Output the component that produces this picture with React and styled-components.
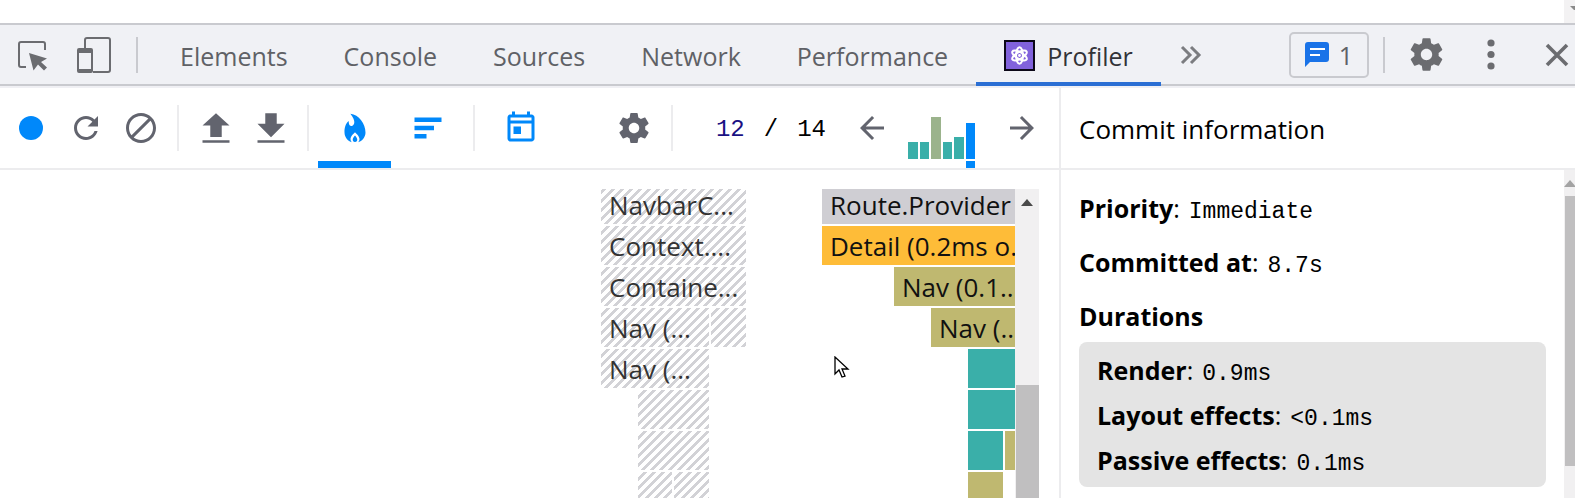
import React from "react";
import styled, { createGlobalStyle } from "styled-components";

const GlobalStyle = createGlobalStyle`
  * {
    box-sizing: border-box;
  }
  body {
    margin: 0;
    overflow: hidden;
    background: #fff;
    color: #000;
    font-family: "Open Sans", "Noto Sans", sans-serif;
    font-size: 25px;
  }
  button,
  input {
    margin: 0;
    padding: 0;
    border: 0;
    background: none;
    color: inherit;
    font: inherit;
  }
  svg {
    display: block;
    flex: none;
  }
`;

const Page = styled.div`
  display: flex;
  flex-direction: column;
  height: 100vh;
  overflow: hidden;
`;

const Viewport = styled.div`
  display: flex;
  justify-content: flex-end;
  flex: none;
  height: 23px;
`;

const ViewportTrack = styled.div`
  width: 11px;
  padding: 6px 0 0 6px;
  overflow: hidden;
  background: #f3f2f3;
`;

const TabBar = styled.header`
  display: flex;
  align-items: center;
  flex: none;
  height: 63px;
  padding-left: 15px;
  border-top: 2px solid #c9cacf;
  border-bottom: 2px solid #c9cacf;
  background: #f0f1f5;
  color: #5f6166;
`;

const BarShade = styled.div`
  flex: none;
  height: 2px;
  background: #f0f0f4;
`;

const BarButton = styled.button`
  display: flex;
  align-items: center;
  justify-content: center;
  flex: none;
  width: ${(props) => props.$width}px;
  height: 59px;
  color: #6b6c70;
`;

const CloseButton = styled(BarButton)`
  margin-left: 24px;
`;

const BarDivider = styled.div`
  flex: none;
  width: 2px;
  height: 36px;
  margin: ${(props) => props.$margin || "0"};
  background: #c9cacf;
`;

const Tabs = styled.nav`
  display: flex;
  flex: 1;
  align-self: stretch;
`;

const Tab = styled.button`
  display: flex;
  align-items: center;
  gap: 12px;
  height: 61px;
  padding: 0 28px;
  color: ${(props) => (props.$active ? "#323338" : "#5f6166")};
  box-shadow: ${(props) => (props.$active ? "inset 0 -4px #2b6fd4" : "none")};
`;

const ExtensionIcon = styled.span`
  display: block;
  border: 2px solid #0c0818;
  background: #8162dc;
`;

const Issues = styled.button`
  display: flex;
  align-items: center;
  justify-content: center;
  gap: 10px;
  width: 80px;
  height: 46px;
  border: 2px solid #c9cacf;
  border-radius: 5px;
`;

const Panels = styled.div`
  display: flex;
  flex: 1;
  min-height: 0;
`;

const Main = styled.main`
  display: flex;
  flex-direction: column;
  flex: 1;
  min-width: 0;
`;

const Toolbar = styled.div`
  display: flex;
  align-items: center;
  flex: none;
  height: 82px;
  padding: 0 10px 0 3px;
  border-bottom: 2px solid #ececee;
`;

const ToolButton = styled.button`
  display: flex;
  align-items: center;
  justify-content: center;
  flex: none;
  width: 55px;
  height: 80px;
  color: ${(props) => (props.$on ? "#0088fa" : "#62646e")};
`;

const ModeButton = styled(ToolButton)`
  width: 73px;
  color: #0088fa;
  box-shadow: ${(props) => (props.$active ? "inset 0 -7px #0088fa" : "none")};
`;

const Divider = styled.div`
  flex: none;
  width: 2px;
  height: 46px;
  margin: 0 9px;
  background: #ececee;
`;

const Spacer = styled.div`
  flex: 1;
`;

const CommitIndex = styled.label`
  display: flex;
  align-items: center;
  gap: 19px;
  padding: 3px 18px 0 0;
  font-family: "Liberation Mono", monospace;
  font-size: 24px;
`;

const IndexInput = styled.input`
  width: 63px;
  color: #1a1183;
  text-align: right;
`;

const Commits = styled.div`
  display: flex;
  align-items: flex-end;
  align-self: stretch;
  gap: 2px;
  width: 67px;
  margin: 0 19px 0 9px;
`;

const Commit = styled.div`
  flex: 1;
  padding-bottom: 2px;
  border-bottom: 7px solid ${(props) => (props.$active ? "#0088fa" : "#fff")};
`;

const CommitBar = styled.div`
  background: ${(props) => props.$color};
`;

const ChartArea = styled.div`
  display: flex;
  flex: 1;
  min-height: 0;
  padding: 19px 20px 0 0;
`;

const Chart = styled.div`
  flex: 1;
  overflow: hidden;
`;

const Flames = styled.div`
  display: flex;
  flex-direction: column;
  gap: 2px;
  width: 414px;
  margin: -4px 0 0 auto;
`;

const FlameRow = styled.div`
  display: flex;
  flex: none;
  height: 39px;
`;

const hatch = `
  linear-gradient(135deg, transparent 32%, #d2d2d6 32% 50%, transparent 50% 82%, #d2d2d6 82%)
  0 0 / 9px 9px
`;

const Flame = styled.div`
  flex: none;
  width: ${(props) => props.$width}px;
  margin-left: ${(props) => props.$before}px;
  padding-left: 8px;
  overflow: hidden;
  background: ${(props) => props.$color || hatch};
  color: ${(props) => (props.$color ? "#111" : "#333")};
  font-size: 26px;
  line-height: 41px;
  white-space: nowrap;
`;

const Scrollbar = styled.div`
  display: flex;
  flex-direction: column;
  align-items: center;
  flex: none;
  width: ${(props) => props.$width}px;
  overflow: hidden;
  background: #f1f0f1;
`;

const ScrollArrow = styled.div`
  display: flex;
  align-items: center;
  justify-content: center;
  flex: none;
  height: 26px;
`;

const ScrollThumb = styled.div`
  align-self: stretch;
  flex: ${(props) => (props.$height ? "none" : 1)};
  height: ${(props) => (props.$height ? props.$height + "px" : "auto")};
  margin-top: ${(props) => props.$top || 0}px;
  margin-left: 1px;
  background: #c0bfc0;
`;

const Sidebar = styled.aside`
  display: flex;
  flex-direction: column;
  flex: none;
  width: 516px;
  border-left: 2px solid #ececee;
`;

const SidebarTitle = styled.div`
  display: flex;
  align-items: center;
  flex: none;
  height: 82px;
  padding: 2px 0 0 18px;
  border-bottom: 2px solid #ececee;
  font-size: 26px;
`;

const SidebarBody = styled.div`
  display: flex;
  flex: 1;
  min-height: 0;
`;

const Info = styled.div`
  flex: 1;
  padding: 18px 18px 0;
`;

const Field = styled.div`
  height: ${(props) => props.$height}px;
  line-height: 40px;
  white-space: nowrap;
`;

const Name = styled.span`
  font-weight: 700;
`;

const Value = styled.span`
  margin-left: 9px;
  font-family: "Liberation Mono", monospace;
  font-size: 23px;
`;

const Durations = styled.div`
  height: 145px;
  padding: 8px 0 0 18px;
  border-radius: 8px;
  background: #e4e4e4;
`;

const Pointer = styled.svg`
  position: absolute;
  left: 834px;
  top: 356px;
`;

const paths = {
  record: "M4 12a8 8 0 1 0 16 0a8 8 0 1 0-16 0",
  reload:
    "M17.65 6.35C16.2 4.9 14.21 4 12 4c-4.42 0-7.99 3.58-7.99 8s3.57 8 7.99 8c3.73 0 6.84-2.55 7.73-6h-2.08c-.82 2.33-3.04 4-5.65 4-3.31 0-6-2.69-6-6s2.69-6 6-6c1.66 0 3.14.69 4.22 1.78L13 11h7V4l-2.35 2.35z",
  clear:
    "M12 2C6.48 2 2 6.48 2 12s4.48 10 10 10 10-4.48 10-10S17.52 2 12 2zM4 12c0-4.42 3.58-8 8-8 1.85 0 3.55.63 4.9 1.69L5.69 16.9C4.63 15.55 4 13.85 4 12zm8 8c-1.85 0-3.55-.63-4.9-1.69L18.31 7.1C19.37 8.45 20 10.15 20 12c0 4.42-3.58 8-8 8z",
  load: "M12 2.14l9 8.2h-5.18v7.7H8.18v-7.7H3zM3 20.13h18v1.73H3z",
  save: "M15.82 2.14v7H21l-9 9-9-9h5.18v-7zM3 20.13h18v1.73H3z",
  flame:
    "M10.07 21.5C7.14 20.69 5 18.06 5 14.94C5 11.8 5.6 9.2 7.83 7.38C7.83 7.38 7.58 11.2 10 10.63C11.5 10.2 13 7.6 8.92 2.5C14.6 3.1 19 9.33 19 14.94C19 18.06 16.86 20.69 13.93 21.5C14.6 21 15 20.4 15 19.3C15 17.4 12 14.8 12 14.8C12 14.8 9 17.4 9 19.3C9 20.4 9.4 21 10.07 21.5zM12 21.4C10.9 21.4 10.5 20.5 10.5 19.7C10.5 18.6 12 17 12 17C12 17 13.5 18.6 13.5 19.7C13.5 20.5 13.1 21.4 12 21.4z",
  ranked: "M3 5h18v3H3zM3 10.5h13v3H3zM3 16h8v3H3z",
  timeline:
    "M19 3h-1V1h-2v2H8V1H6v2H5c-1.11 0-2 .9-2 2v14c0 1.1.89 2 2 2h14c1.1 0 2-.9 2-2V5c0-1.1-.9-2-2-2zm0 16H5V9h14v10zm0-12H5V5h14v2zM7 11h5v5H7z",
  settings:
    "M19.43 12.98c.04-.32.07-.64.07-.98s-.03-.66-.07-.98l2.11-1.65c.19-.15.24-.42.12-.64l-2-3.46c-.12-.22-.39-.3-.61-.22l-2.49 1c-.52-.4-1.08-.73-1.69-.98l-.38-2.65C14.46 2.18 14.25 2 14 2h-4c-.25 0-.46.18-.49.42l-.38 2.65c-.61.25-1.17.59-1.69.98l-2.49-1c-.23-.09-.49 0-.61.22l-2 3.46c-.13.22-.07.49.12.64l2.11 1.65c-.04.32-.07.65-.07.98s.03.66.07.98l-2.11 1.65c-.19.15-.24.42-.12.64l2 3.46c.12.22.39.3.61.22l2.49-1c.52.4 1.08.73 1.69.98l.38 2.65c.03.24.24.42.49.42h4c.25 0 .46-.18.49-.42l.38-2.65c.61-.25 1.17-.59 1.69-.98l2.49 1c.23.09.49 0 .61-.22l2-3.46c.12-.22.07-.49-.12-.64l-2.11-1.65zM12 15.5c-1.93 0-3.5-1.57-3.5-3.5s1.57-3.5 3.5-3.5 3.5 1.57 3.5 3.5-1.57 3.5-3.5 3.5z",
  previous: "M20 11H7.83l5.59-5.59L12 4l-8 8 8 8 1.41-1.41L7.83 13H20v-2z",
  next: "M12 4l-1.41 1.41L16.17 11H4v2h12.17l-5.58 5.59L12 20l8-8z",
};

const Icon = ({ name, size = 36 }) => (
  <svg width={size} height={size} viewBox="0 0 24 24" fill="currentColor">
    <path d={paths[name]} />
  </svg>
);

const InspectIcon = () => (
  <svg width="34" height="34" viewBox="0 0 34 34" fill="none">
    <path
      d="M11 29H6a2 2 0 0 1-2-2V6a2 2 0 0 1 2-2h22a2 2 0 0 1 2 2v6"
      stroke="currentColor"
      strokeWidth="2"
    />
    <path d="M14 15l18 5.5-6 3.5 6 5.5-3 3-6-6-4.500 6z" fill="currentColor" />
  </svg>
);

const DeviceIcon = () => (
  <svg width="36" height="38" viewBox="0 0 36 38" fill="none">
    <path
      d="M9 12V4a2 2 0 0 1 2-2h21a2 2 0 0 1 2 2v30a2 2 0 0 1-2 2H17"
      stroke="currentColor"
      strokeWidth="2"
    />
    <path
      d="M3 12h12a2 2 0 0 1 2 2v21a2 2 0 0 1-2 2H3a2 2 0 0 1-2-2V14a2 2 0 0 1 2-2zM3 17v16h12V17z"
      fill="currentColor"
      fillRule="evenodd"
    />
  </svg>
);

const AtomIcon = () => (
  <svg width="27" height="27" viewBox="0 0 27 27" fill="none" stroke="#fff" strokeWidth="2">
    {[0, 60, 120].map((angle) => (
      <ellipse
        key={angle}
        cx="13.5"
        cy="13.5"
        rx="3.4"
        ry="8.2"
        transform={`rotate(${angle} 13.5 13.5)`}
      />
    ))}
    <circle cx="13.5" cy="13.5" r="1.4" fill="#fff" stroke="none" />
  </svg>
);

const MoreTabsIcon = () => (
  <svg width="22" height="20" viewBox="0 0 22 20" fill="none" stroke="#7b7c80" strokeWidth="3">
    <path d="M2 2l8 8-8 8M11 2l8 8-8 8" />
  </svg>
);

const IssueIcon = () => (
  <svg width="24" height="25" viewBox="0 0 24 25">
    <path d="M3 0h18a3 3 0 0 1 3 3v14a3 3 0 0 1-3 3H5l-5 5V3a3 3 0 0 1 3-3z" fill="#1a73e8" />
    <path d="M5 7h15M5 13h10" stroke="#fff" strokeWidth="2" />
  </svg>
);

const DotsIcon = () => (
  <svg width="8" height="32" viewBox="0 0 8 32" fill="currentColor">
    <circle cx="4" cy="4" r="3.6" />
    <circle cx="4" cy="15.5" r="3.6" />
    <circle cx="4" cy="27" r="3.6" />
  </svg>
);

const CloseIcon = () => (
  <svg width="24" height="24" viewBox="0 0 24 24" stroke="currentColor" strokeWidth="3.6">
    <path d="M2 2l20 20M22 2L2 22" />
  </svg>
);

const UpArrow = ({ color }) => (
  <svg width="12" height="7" viewBox="0 0 12 7">
    <path d="M0 7l6-7 6 7z" fill={color} />
  </svg>
);

const tabs = ["Elements", "Console", "Sources", "Network", "Performance"];

const teal = "#3aafa9";
const olive = "#bfb870";

const commits = [
  { height: 17, color: teal },
  { height: 17, color: teal },
  { height: 42, color: "#9bb38c" },
  { height: 17, color: teal },
  { height: 22, color: teal },
  { height: 36, color: "#0088fa", active: true },
];

// before is the empty space to the left of a flame
const rows = [
  [
    { before: 0, width: 145, label: "NavbarC..." },
    { before: 76, width: 193, label: "Route.Provider", color: "#cfced3" },
  ],
  [
    { before: 0, width: 145, label: "Context...." },
    { before: 76, width: 193, label: "Detail (0.2ms o...", color: "#febc38" },
  ],
  [
    { before: 0, width: 145, label: "Containe..." },
    { before: 148, width: 121, label: "Nav (0.1...", color: olive },
  ],
  [
    { before: 0, width: 108, label: "Nav (..." },
    { before: 2, width: 35 },
    { before: 185, width: 84, label: "Nav (...", color: olive },
  ],
  [
    { before: 0, width: 108, label: "Nav (..." },
    { before: 259, width: 47, color: teal },
  ],
  [
    { before: 37, width: 71 },
    { before: 259, width: 47, color: teal },
  ],
  [
    { before: 37, width: 71 },
    { before: 259, width: 35, color: teal },
    { before: 2, width: 10, color: olive },
  ],
  [
    { before: 37, width: 34 },
    { before: 2, width: 35 },
    { before: 259, width: 35, color: olive },
  ],
];

const durations = [
  { name: "Render", value: "0.9ms" },
  { name: "Layout effects", value: "<0.1ms" },
  { name: "Passive effects", value: "0.1ms" },
];

const InfoField = ({ name, value, height }) => (
  <Field $height={height}>
    <Name>{name}</Name>:<Value>{value}</Value>
  </Field>
);

const DevToolsBar = () => (
  <TabBar>
    <BarButton $width={34} aria-label="Inspect">
      <InspectIcon />
    </BarButton>
    <BarButton $width={90} aria-label="Toggle device">
      <DeviceIcon />
    </BarButton>
    <BarDivider $margin="0 14px 0 -3px" />
    <Tabs>
      {tabs.map((tab) => (
        <Tab key={tab}>{tab}</Tab>
      ))}
      <Tab $active>
        <ExtensionIcon>
          <AtomIcon />
        </ExtensionIcon>
        Profiler
      </Tab>
      <BarButton $width={60} aria-label="More tabs">
        <MoreTabsIcon />
      </BarButton>
    </Tabs>
    <Issues>
      <IssueIcon />1
    </Issues>
    <BarDivider $margin="0 0 0 14px" />
    <BarButton $width={82} aria-label="Settings">
      <Icon name="settings" size={39} />
    </BarButton>
    <BarButton $width={48} aria-label="Customize">
      <DotsIcon />
    </BarButton>
    <CloseButton $width={36} aria-label="Close">
      <CloseIcon />
    </CloseButton>
  </TabBar>
);

const ProfilerToolbar = () => (
  <Toolbar>
    <ToolButton $on aria-label="Record">
      <Icon name="record" />
    </ToolButton>
    <ToolButton aria-label="Reload">
      <Icon name="reload" />
    </ToolButton>
    <ToolButton aria-label="Clear">
      <Icon name="clear" />
    </ToolButton>
    <Divider />
    <ToolButton aria-label="Load profile">
      <Icon name="load" />
    </ToolButton>
    <ToolButton aria-label="Save profile">
      <Icon name="save" />
    </ToolButton>
    <Divider />
    <ModeButton $active aria-label="Flamegraph">
      <Icon name="flame" />
    </ModeButton>
    <ModeButton aria-label="Ranked">
      <Icon name="ranked" />
    </ModeButton>
    <Divider />
    <ModeButton aria-label="Timeline">
      <Icon name="timeline" />
    </ModeButton>
    <Spacer />
    <ToolButton aria-label="Profiler settings">
      <Icon name="settings" />
    </ToolButton>
    <Divider />
    <CommitIndex>
      <IndexInput defaultValue="12" aria-label="Commit" />
      <span>/</span>
      <span>14</span>
    </CommitIndex>
    <ToolButton aria-label="Previous commit">
      <Icon name="previous" />
    </ToolButton>
    <Commits>
      {commits.map((commit, i) => (
        <Commit key={i} $active={commit.active}>
          <CommitBar $color={commit.color} style={{ height: commit.height }} />
        </Commit>
      ))}
    </Commits>
    <ToolButton aria-label="Next commit">
      <Icon name="next" />
    </ToolButton>
  </Toolbar>
);

const FlameGraph = () => (
  <ChartArea>
    <Chart>
      <Flames>
        {rows.map((row, i) => (
          <FlameRow key={i}>
            {row.map((flame, j) => (
              <Flame key={j} $before={flame.before} $width={flame.width} $color={flame.color}>
                {flame.label}
              </Flame>
            ))}
          </FlameRow>
        ))}
      </Flames>
    </Chart>
    <Scrollbar $width={24}>
      <ScrollArrow>
        <UpArrow color="#4a4a4a" />
      </ScrollArrow>
      <ScrollThumb $top={170} />
    </Scrollbar>
  </ChartArea>
);

const CommitInfo = () => (
  <Sidebar>
    <SidebarTitle>Commit information</SidebarTitle>
    <SidebarBody>
      <Info>
        <InfoField name="Priority" value="Immediate" height={54} />
        <InfoField name="Committed at" value="8.7s" height={54} />
        <Field $height={46}>
          <Name>Durations</Name>
        </Field>
        <Durations>
          {durations.map((item) => (
            <InfoField key={item.name} name={item.name} value={item.value} height={45} />
          ))}
        </Durations>
      </Info>
      <Scrollbar $width={11}>
        <ScrollArrow>
          <UpArrow color="#a3a3a3" />
        </ScrollArrow>
        <ScrollThumb $height={270} />
      </Scrollbar>
    </SidebarBody>
  </Sidebar>
);

const App = () => (
  <>
    <GlobalStyle />
    <Page>
      <Viewport>
        <ViewportTrack>
          <svg width="12" height="4" viewBox="0 0 12 4">
            <path d="M0 0h12L6 6z" fill="#8a8a8a" />
          </svg>
        </ViewportTrack>
      </Viewport>
      <DevToolsBar />
      <BarShade />
      <Panels>
        <Main>
          <ProfilerToolbar />
          <FlameGraph />
        </Main>
        <CommitInfo />
      </Panels>
    </Page>
    <Pointer width="16" height="22" viewBox="0 0 16 22">
      <path d="M1 1v17l4-4 3 7 3-1-3-7h6z" fill="#fff" stroke="#000" strokeWidth="1.3" />
    </Pointer>
  </>
);

export default App;
